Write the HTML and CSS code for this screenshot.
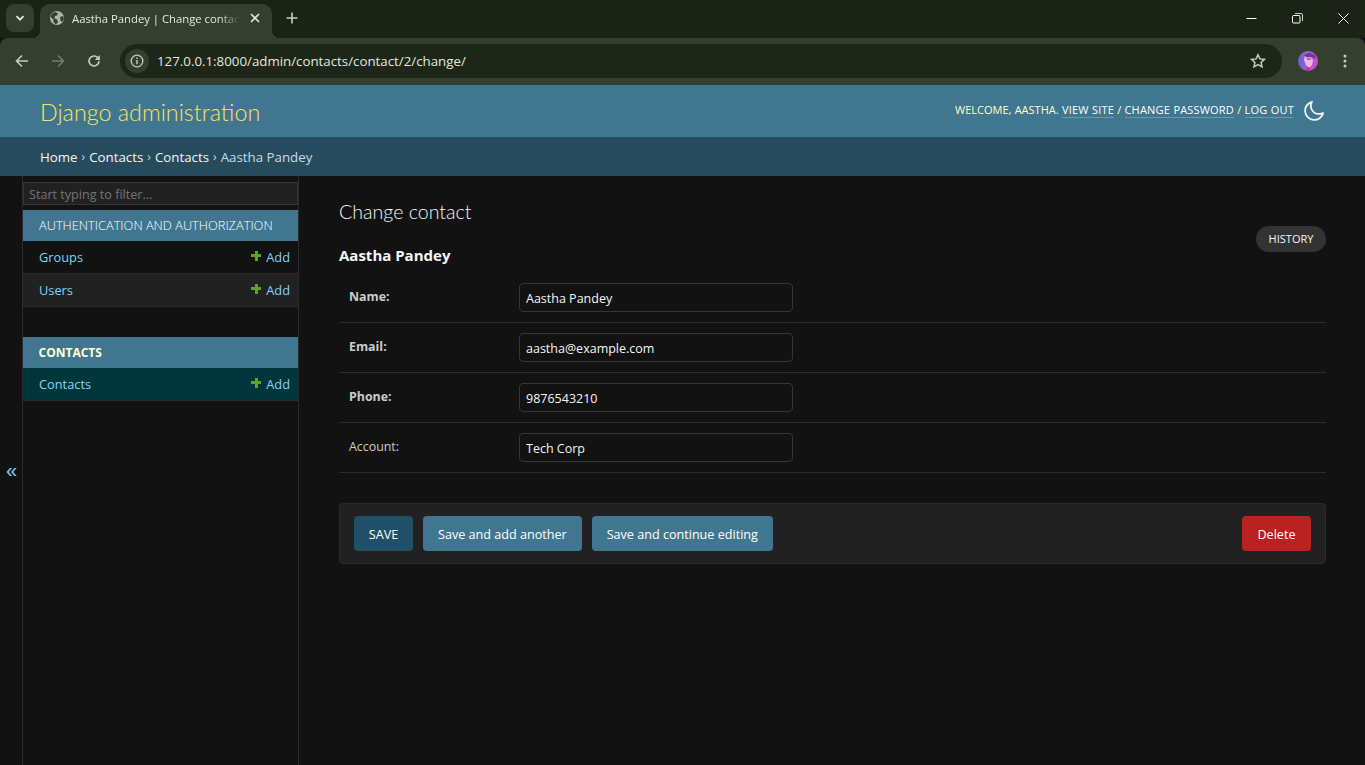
FILE: index.html
```html
<!DOCTYPE html>
<html lang="en">
<head>
  <meta charset="UTF-8" />
  <title>Aastha Pandey | Change contact</title>
  <link rel="stylesheet" href="styles.css">
</head>
<body>

  <div class="tabstrip">
    <button class="tab-search">
      <svg width="12" height="12" viewBox="0 0 12 12"><path d="M2.5 4.2 6 7.7l3.5-3.5" fill="none" stroke="#e3e8df" stroke-width="1.8"/></svg>
    </button>
    <div class="tab">
      <svg class="favicon" width="16" height="16" viewBox="0 0 16 16">
        <circle cx="8" cy="8" r="7" fill="#aeb6aa"/>
        <path d="M3 3.5 6.5 2 9 3.5 8 5.5 6 6 5.5 8.5 8 9.5 9 12 7 14.5 4.5 12 4.5 9.5 1.5 7ZM11 7l3-1 1 3-2 3-1.500-1.500Z" fill="#353f30"/>
      </svg>
      <span class="tab-title">Aastha Pandey | Change contac</span>
      <svg class="tab-close" width="10" height="10" viewBox="0 0 10 10"><path d="M1 1l8 8M9 1l-8 8" stroke="#e3e8df" stroke-width="1.600"/></svg>
    </div>
    <svg class="new-tab" width="12" height="12" viewBox="0 0 12 12"><path d="M6 .5v11M.5 6h11" stroke="#c9d0c5" stroke-width="1.600"/></svg>
    <div class="window-buttons">
      <svg width="11" height="11" viewBox="0 0 11 11"><path d="M.5 5.500h10" stroke="#fff"/></svg>
      <svg width="11" height="11" viewBox="0 0 11 11"><rect x=".5" y="2.500" width="7.500" height="7.500" rx="1" fill="none" stroke="#fff"/><path d="M3 .5h6a1.500 1.500 0 0 1 1.500 1.500v6" fill="none" stroke="#fff" stroke-width=".8"/></svg>
      <svg width="11" height="11" viewBox="0 0 11 11"><path d="M.5.5l10 10M10.500.5l-10 10" stroke="#fff"/></svg>
    </div>
  </div>

  <div class="toolbar">
    <svg class="nav-icon" width="14" height="14" viewBox="0 0 14 14"><path d="M13 7H2M7 1.500 1.500 7 7 12.500" fill="none" stroke="#c4ccc0" stroke-width="1.600"/></svg>
    <svg class="nav-icon" width="14" height="14" viewBox="0 0 14 14"><path d="M1 7h11M7 1.500 12.500 7 7 12.500" fill="none" stroke="#737c6e" stroke-width="1.600"/></svg>
    <svg class="nav-icon" width="14" height="14" viewBox="0 0 14 14"><path d="M12 7a5 5 0 1 1-1.500-3.600L12.500 5.500" fill="none" stroke="#c4ccc0" stroke-width="1.600"/><path d="M12.800 1v5h-5z" fill="#c4ccc0"/></svg>
    <div class="omnibox">
      <span class="site-info">
        <svg width="14" height="14" viewBox="0 0 14 14"><circle cx="7" cy="7" r="5.800" fill="none" stroke="#c4ccc0" stroke-width="1.300"/><path d="M7 6v4.200M7 3.600v1.300" stroke="#c4ccc0" stroke-width="1.400"/></svg>
      </span>
      <span class="url">127.0.0.1:8000/admin/contacts/contact/2/change/</span>
      <svg class="star" width="16" height="16" viewBox="0 0 16 16"><path d="M8 1.800l1.900 4.100 4.500.5-3.300 3 .9 4.500L8 11.700l-4 2.200.9-4.500-3.300-3 4.500-.5z" fill="none" stroke="#c4ccc0" stroke-width="1.500"/></svg>
    </div>
    <svg class="avatar" width="20" height="20" viewBox="0 0 20 20">
      <defs><linearGradient id="hair" x1="0" x2="1"><stop offset="0" stop-color="#5f63d8"/><stop offset=".5" stop-color="#a55fd6"/><stop offset="1" stop-color="#c94fc8"/></linearGradient></defs>
      <circle cx="10" cy="10" r="10" fill="url(#hair)"/>
      <path d="M7 4 12 5 15 9 14 14 11 17 8 14 6 9Z" fill="#efb6e4"/>
      <path d="M6 4.500 11 1.500 17 4 18 8 13 6 9 6.500Z" fill="#6d3a9e"/>
      <path d="M9 7.500h4v1H9z" fill="#5c2a80"/>
      <path d="M8.500 19l.8-3 2.400.5-.4 3z" fill="#e0205a"/>
    </svg>
    <svg class="menu" width="4" height="14" viewBox="0 0 4 14"><circle cx="2" cy="2" r="1.500" fill="#c4ccc0"/><circle cx="2" cy="7" r="1.500" fill="#c4ccc0"/><circle cx="2" cy="12" r="1.500" fill="#c4ccc0"/></svg>
  </div>

  <header class="site-header">
    <div class="branding">Django administration</div>
    <div class="user-tools">
      WELCOME, <strong>AASTHA</strong>.
      <a href="#">View site</a> /
      <a href="#">Change password</a> /
      <a href="#">Log out</a>
    </div>
    <svg class="theme-toggle" width="22" height="22" viewBox="0 0 22 22"><path d="M9 1.800a9.200 9.200 0 1 0 11.200 11.200 8 8 0 0 1-3.700.9A8 8 0 0 1 9 1.800Z" fill="none" stroke="#f2f5f7" stroke-width="1.800" stroke-linejoin="round"/></svg>
  </header>

  <div class="breadcrumbs">
    <a href="#">Home</a> <span class="sep">›</span>
    <a href="#">Contacts</a> <span class="sep">›</span>
    <a href="#">Contacts</a> <span class="sep">›</span>
    Aastha Pandey
  </div>

  <div class="main">
    <button class="sidebar-toggle">«</button>

    <nav class="sidebar">
      <input class="nav-filter" type="text" placeholder="Start typing to filter...">

      <div class="app-module">
        <div class="caption">Authentication and Authorization</div>
        <div class="model-row">
          <a href="#">Groups</a>
          <a href="#" class="add-link"><span class="plus"></span>Add</a>
        </div>
        <div class="model-row alt">
          <a href="#">Users</a>
          <a href="#" class="add-link"><span class="plus"></span>Add</a>
        </div>
      </div>

      <div class="app-module">
        <div class="caption current">Contacts</div>
        <div class="model-row selected">
          <a href="#">Contacts</a>
          <a href="#" class="add-link"><span class="plus"></span>Add</a>
        </div>
      </div>
    </nav>

    <main class="content">
      <h1>Change contact</h1>
      <h2>Aastha Pandey</h2>
      <a href="#" class="history">History</a>

      <form>
        <div class="form-row">
          <label class="required">Name:</label>
          <input type="text" value="Aastha Pandey">
        </div>
        <div class="form-row">
          <label class="required">Email:</label>
          <input type="text" value="aastha@example.com">
        </div>
        <div class="form-row">
          <label class="required">Phone:</label>
          <input type="text" value="9876543210">
        </div>
        <div class="form-row">
          <label>Account:</label>
          <input type="text" value="Tech Corp">
        </div>

        <div class="submit-row">
          <button type="button" class="btn default">SAVE</button>
          <button type="button" class="btn">Save and add another</button>
          <button type="button" class="btn">Save and continue editing</button>
          <button type="button" class="btn delete">Delete</button>
        </div>
      </form>
    </main>
  </div>

</body>
</html>
```

FILE: styles.css
```css
* {
  box-sizing: border-box;
}

html, body {
  height: 100%;
}

body {
  margin: 0;
  display: flex;
  flex-direction: column;
  overflow: hidden;
  font-family: "Open Sans", "Noto Sans", sans-serif;
  font-size: 13px;
  background-color: #121212;
  color: #f5f5f5;
}

a {
  color: inherit;
  text-decoration: none;
}

/* browser chrome */
.tabstrip {
  height: 38px;
  flex: none;
  display: flex;
  align-items: center;
  background-color: #1a2315;
  padding-left: 6px;
}

.tab-search {
  width: 28px;
  height: 28px;
  border: none;
  border-radius: 8px;
  background-color: #353f30;
  display: flex;
  align-items: center;
  justify-content: center;
  padding: 0;
  margin-bottom: 2px;
}

.tab {
  position: relative;
  width: 232px;
  height: 34px;
  margin: 4px 0 0 6px;
  padding: 0 10px 6px 9px;
  display: flex;
  align-items: center;
  background-color: #353f30;
  border-radius: 10px 10px 0 0;
}

/* flared corners at the foot of the active tab */
.tab::before,
.tab::after {
  content: "";
  position: absolute;
  bottom: 0;
  width: 8px;
  height: 8px;
}

.tab::before {
  left: -8px;
  background: radial-gradient(circle at 0 0, transparent 8px, #353f30 8.500px);
}

.tab::after {
  right: -8px;
  background: radial-gradient(circle at 100% 0, transparent 8px, #353f30 8.500px);
}

.favicon {
  flex: none;
  margin-right: 7px;
}

.tab-title {
  flex: 1;
  overflow: hidden;
  white-space: nowrap;
  font-size: 11.3px;
  color: #e3e8df;
  -webkit-mask-image: linear-gradient(to right, #000 88%, transparent 100%);
  mask-image: linear-gradient(to right, #000 88%, transparent 100%);
}

.tab-close {
  flex: none;
  margin: 0 2px 0 10px;
}

.new-tab {
  margin: 0 0 2px 14px;
}

.window-buttons {
  margin: 0 0 2px auto;
  display: flex;
  gap: 35px;
  padding-right: 16px;
}

.toolbar {
  height: 47px;
  flex: none;
  display: flex;
  align-items: center;
  background-color: #353f30;
  border-radius: 8px 8px 0 0;
  padding: 0 0 2px 15px;
}

.nav-icon {
  flex: none;
  margin-right: 22px;
}

.omnibox {
  width: 1162px;
  height: 34px;
  margin-left: -3px;
  padding: 0 16px 0 5px;
  display: flex;
  align-items: center;
  background-color: #1d2618;
  border-radius: 17px;
}

.site-info {
  width: 24px;
  height: 24px;
  border-radius: 50%;
  background-color: #353f30;
  display: flex;
  align-items: center;
  justify-content: center;
  margin-right: 8px;
}

.url {
  flex: 1;
  font-size: 13.300px;
  color: #e3e8df;
}

.avatar {
  flex: none;
  margin-left: 16px;
}

.menu {
  flex: none;
  margin-left: 25px;
}

/* admin header */
.site-header {
  height: 52px;
  flex: none;
  display: flex;
  align-items: center;
  padding: 0 40px;
  background-color: #417690;
  color: #ffc;
}

.branding {
  padding-top: 2px;
  font-family: Lato, "Open Sans", sans-serif;
  font-size: 23.300px;
  font-weight: 300;
  color: #fbe35f;
}

.user-tools {
  margin-left: auto;
  padding-bottom: 3px;
  font-size: 11px;
  word-spacing: 0.4px;
  text-transform: uppercase;
}

.user-tools strong {
  font-weight: 400;
}

.user-tools a {
  color: #fff;
  letter-spacing: 0.18px;
  border-bottom: 1px solid rgba(255, 255, 255, 0.25);
}

.theme-toggle {
  margin-left: 9px;
}

.breadcrumbs {
  height: 39px;
  flex: none;
  display: flex;
  align-items: center;
  gap: 4px;
  padding: 0 40px;
  background-color: #264b5d;
  color: #c4dce8;
  font-size: 13.300px;
}

.breadcrumbs a {
  color: #f5f5f5;
}

.sep {
  font-size: 12px;
}

/* sidebar */
.main {
  flex: 1;
  display: flex;
  min-height: 0;
}

.sidebar-toggle {
  width: 23px;
  flex: none;
  padding: 0 0 0 1px;
  border: none;
  border-right: 1px solid #2b2b2b;
  background-color: #121212;
  color: #81d4fa;
  font-size: 20px;
}

.sidebar {
  width: 276px;
  flex: none;
  padding-top: 6px;
  border-right: 1px solid #2b2b2b;
}

.nav-filter {
  display: block;
  width: 275px;
  height: 23px;
  margin-bottom: 5px;
  padding: 1px 5px 0;
  border: 1px solid #353535;
  background-color: #212121;
  color: #eee;
  font-family: inherit;
  font-size: 12.600px;
}

.nav-filter::placeholder {
  color: #757575;
}

.app-module {
  margin-bottom: 30px;
}

.caption {
  height: 31px;
  display: flex;
  align-items: center;
  padding: 0 0 2px 16px;
  background-color: #417690;
  color: #fff;
  font-size: 12.800px;
  font-weight: 300;
  text-transform: uppercase;
}

.caption.current {
  padding: 0 0 0 15.500px;
  color: #ffc;
  font-size: 12px;
  font-weight: 700;
}

.model-row {
  height: 33px;
  display: flex;
  align-items: center;
  justify-content: space-between;
  padding: 0 8px 0 16px;
  border-bottom: 1px solid #2b2b2b;
  color: #81d4fa;
  font-size: 12.800px;
}

.model-row.alt {
  background-color: #212121;
}

.model-row.selected {
  background-color: #00363a;
}

.add-link {
  display: flex;
  align-items: center;
}

.plus {
  width: 10px;
  height: 10px;
  margin: -3px 5px 0 0;
  background:
    linear-gradient(#5fa225, #5fa225) center / 10px 3px no-repeat,
    linear-gradient(#5fa225, #5fa225) center / 3px 10px no-repeat;
}

/* content */
.content {
  flex: 1;
  position: relative;
  padding: 24px 39px 0 40px;
}

h1 {
  margin: 0 0 21px;
  font-family: Lato, "Open Sans", sans-serif;
  font-size: 19.600px;
  font-weight: 300;
  line-height: 24px;
}

h2 {
  margin: 0 0 8px;
  font-size: 15px;
  font-weight: 700;
  line-height: 20px;
}

.history {
  position: absolute;
  top: 50px;
  right: 39px;
  width: 70px;
  height: 26px;
  padding-bottom: 1px;
  display: flex;
  align-items: center;
  justify-content: center;
  border-radius: 13px;
  background-color: #333;
  font-size: 11px;
  text-transform: uppercase;
}

.form-row {
  height: 50px;
  display: flex;
  align-items: flex-start;
  padding: 10px;
  border-bottom: 1px solid #2b2b2b;
}

.form-row label {
  width: 170px;
  flex: none;
  line-height: 28px;
  color: #ccc;
  font-size: 12.400px;
  font-weight: 400;
}

.form-row label.required {
  font-weight: 700;
}

.form-row input {
  width: 274px;
  height: 29px;
  padding: 2px 6px 0;
  border: 1px solid #353535;
  border-radius: 4px;
  background-color: #121212;
  color: #f5f5f5;
  font-family: inherit;
  font-size: 12.500px;
}

.submit-row {
  height: 61px;
  margin-top: 30px;
  display: flex;
  align-items: center;
  gap: 10px;
  padding: 0 14px;
  background-color: #212121;
  border: 1px solid #2b2b2b;
  border-radius: 4px;
}

.btn {
  height: 35px;
  padding: 2px 15px 0;
  border: none;
  border-radius: 4px;
  background-color: #417690;
  color: #fff;
  font-family: inherit;
  font-size: 12.600px;
}

.btn.default {
  width: 59px;
  padding: 2px 0 0;
  background-color: #205067;
}

.btn.delete {
  width: 69px;
  padding: 2px 0 0;
  margin-left: auto;
  background-color: #ba2121;
}
```
